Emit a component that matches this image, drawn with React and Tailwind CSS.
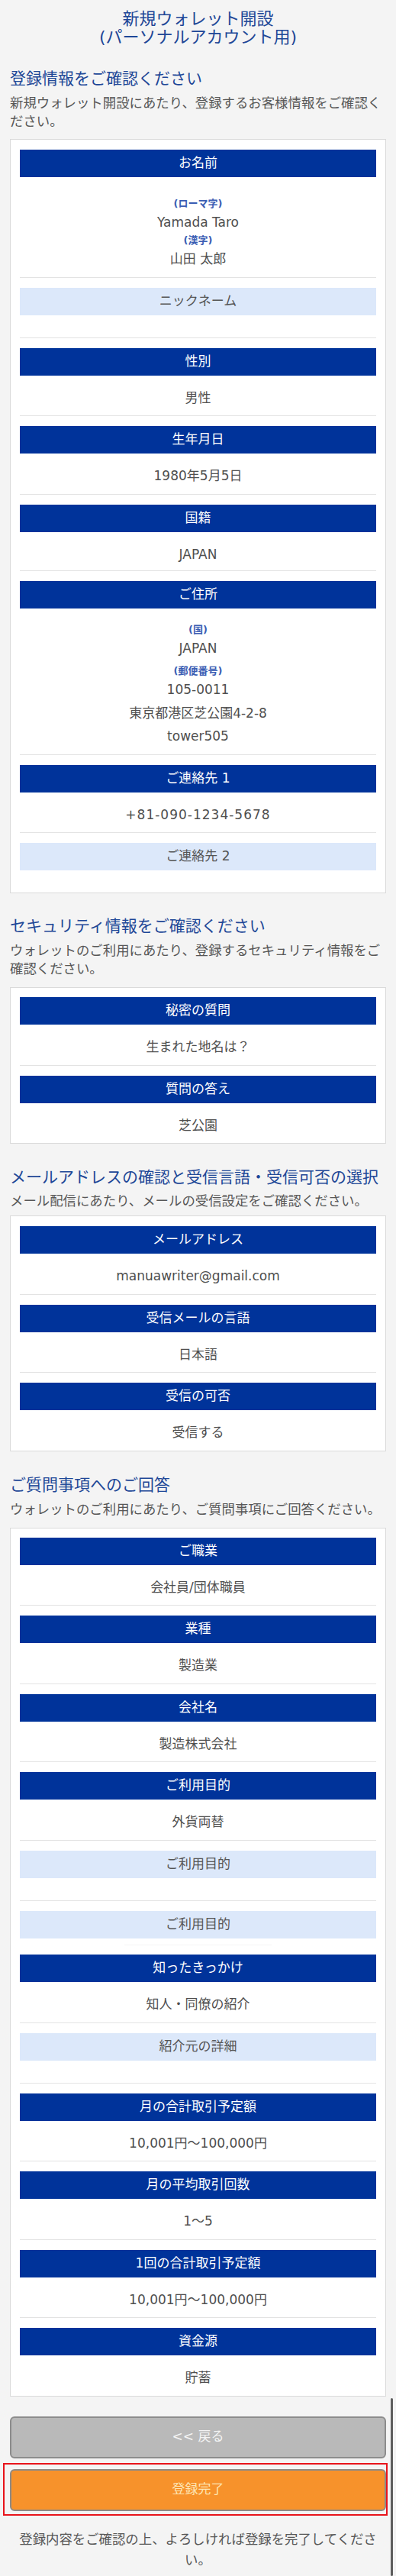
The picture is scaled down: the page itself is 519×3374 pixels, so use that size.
import React from "react";

function Head({ children, light }) {
  return (
    <div
      className={
        light
          ? "h-[36px] flex items-center justify-center text-[17px] bg-[#dce8fa] text-[#555555]"
          : "h-[36px] flex items-center justify-center text-[17px] bg-[#00339a] text-white"
      }
    >
      {children}
    </div>
  );
}

function Val({ children, short, className = "" }) {
  return (
    <div
      className={
        (short
          ? "pt-[17px] pb-[9px] text-center text-[17px] leading-[24px] text-[#4f4f4f] "
          : "pt-[17px] pb-[11.5px] text-center text-[17px] leading-[24px] text-[#4f4f4f] ") +
        className
      }
    >
      {children}
    </div>
  );
}

function Empty() {
  return <div className="h-[29px]" />;
}

function Rule() {
  return <div className="h-px bg-[#e3e3e3] mb-[13px]" />;
}

function Label({ children }) {
  return (
    <div className="text-[13px] leading-[24px] font-bold text-[#3a5db3]">
      {children}
    </div>
  );
}

function Line({ children, className = "" }) {
  return (
    <div className={"text-[17px] leading-[24px] text-[#4f4f4f] " + className}>
      {children}
    </div>
  );
}

function Card({ children, className = "" }) {
  return (
    <div className={"bg-white border border-[#dadada] px-[12px] " + className}>
      {children}
    </div>
  );
}

function Item({ title, value, light, last, short, valueClass }) {
  return (
    <div>
      <Head light={light}>{title}</Head>
      {value === undefined ? (
        <Empty />
      ) : (
        <Val short={short} className={valueClass}>
          {value}
        </Val>
      )}
      {!last && <Rule />}
    </div>
  );
}

export default function App() {
  return (
    <div className="relative min-h-[3374px] bg-[#f4f4f4] px-[13px] pt-[13px] pb-[6px] font-['DejaVu_Sans','Noto_Sans_CJK_JP',sans-serif]">
      <h1 className="text-center text-[22px] leading-[24px] text-[#1e4797] font-normal">
        新規ウォレット開設
        <br />
        (パーソナルアカウント用)
      </h1>

      {/* Section 1 */}
      <h2 className="mt-[27px] text-[21px] leading-[30px] text-[#1e4797] font-normal">
        登録情報をご確認ください
      </h2>
      <p className="mt-[5px] text-[17.4px] leading-[24px] text-[#575757]">
        新規ウォレット開設にあたり、登録するお客様情報をご確認ください。
      </p>
      <Card className="mt-[11px] pt-[13px]">
        <div>
          <Head>お名前</Head>
          <div className="pt-[23px] pb-[11.5px] text-center">
            <Label>(ローマ字)</Label>
            <Line>Yamada Taro</Line>
            <Label>(漢字)</Label>
            <Line>山田 太郎</Line>
          </div>
          <Rule />
        </div>
        <Item title="ニックネーム" light />
        <Item title="性別" value="男性" />
        <Item title="生年月日" value="1980年5月5日" />
        <Item title="国籍" value="JAPAN" short />
        <div>
          <Head>ご住所</Head>
          <div className="pt-[16px] pb-[12px] text-center">
            <Label>(国)</Label>
            <Line>JAPAN</Line>
            <div className="mt-[6px]">
              <Label>(郵便番号)</Label>
              <Line>105-0011</Line>
            </div>
            <Line className="mt-[7px]">東京都港区芝公園4-2-8</Line>
            <Line className="mt-[6px]">tower505</Line>
          </div>
          <Rule />
        </div>
        <Item title="ご連絡先 1" value="+81-090-1234-5678" valueClass="tracking-[1px]" />
        <Item title="ご連絡先 2" light last />
      </Card>

      {/* Section 2 */}
      <h2 className="mt-[28px] text-[21px] leading-[30px] text-[#1e4797] font-normal">
        セキュリティ情報をご確認ください
      </h2>
      <p className="mt-[5px] text-[17.4px] leading-[24px] text-[#575757]">
        ウォレットのご利用にあたり、登録するセキュリティ情報をご確認ください。
      </p>
      <Card className="mt-[12px] pt-[12px]">
        <Item title="秘密の質問" value="生まれた地名は？" />
        <Item title="質問の答え" value="芝公園" last />
      </Card>

      {/* Section 3 */}
      <h2 className="mt-[29px] text-[21px] leading-[30px] text-[#1e4797] font-normal">
        メールアドレスの確認と受信言語・受信可否の選択
      </h2>
      <p className="mt-[4px] text-[17.4px] leading-[24px] text-[#575757]">
        メール配信にあたり、メールの受信設定をご確認ください。
      </p>
      <Card className="mt-[7px] pt-[13px]">
        <Item title="メールアドレス" value="manuawriter@gmail.com" />
        <Item title="受信メールの言語" value="日本語" />
        <Item title="受信の可否" value="受信する" last />
      </Card>

      {/* Section 4 */}
      <h2 className="mt-[29px] text-[21px] leading-[30px] text-[#1e4797] font-normal">
        ご質問事項へのご回答
      </h2>
      <p className="mt-[5px] text-[17.4px] leading-[24px] text-[#575757]">
        ウォレットのご利用にあたり、ご質問事項にご回答ください。
      </p>
      <Card className="mt-[12px] pt-[12px]">
        <Item title="ご職業" value="会社員/団体職員" />
        <Item title="業種" value="製造業" />
        <Item title="会社名" value="製造株式会社" />
        <Item title="ご利用目的" value="外貨両替" />
        <Item title="ご利用目的" light />
        <div>
          <Head light>ご利用目的</Head>
          <div className="h-[8px]" />
          <div className="h-px mx-[137px] bg-[#f4f4f4] mb-[12.5px]" />
        </div>
        <Item title="知ったきっかけ" value="知人・同僚の紹介" />
        <Item title="紹介元の詳細" light />
        <Item title="月の合計取引予定額" value="10,001円〜100,000円" />
        <Item title="月の平均取引回数" value="1〜5" />
        <Item title="1回の合計取引予定額" value="10,001円〜100,000円" />
        <Item title="資金源" value="貯蓄" last />
      </Card>

      {/* Buttons */}
      <button
        type="button"
        className="mt-[26px] w-full h-[55px] rounded-[6px] border-2 border-[#8c8c8c] bg-[#b9b9b9] text-[17px] text-[#f4f4f4] flex items-center justify-center"
      >
        &lt;&lt; 戻る
      </button>
      <div className="mt-[6px] -ml-[9px] -mr-[2px] border-2 border-[#e8141b] pl-[7px] pt-[6px] pb-[4px]">
        <button
          type="button"
          className="w-full h-[55px] rounded-[6px] border-2 border-[#8f8a84] bg-[#f7922b] text-[17px] text-[#fde6b6] flex items-center justify-center"
        >
          登録完了
        </button>
      </div>
      <p className="mt-[18.5px] px-[10px] text-center text-[17.4px] leading-[27px] text-[#575757]">
        登録内容をご確認の上、よろしければ登録を完了してください。
      </p>

      {/* scrollbar indicator */}
      <div className="absolute right-[4px] top-[3141px] bottom-0 w-[3px] rounded-full bg-[#5e5e5e]" />
    </div>
  );
}
